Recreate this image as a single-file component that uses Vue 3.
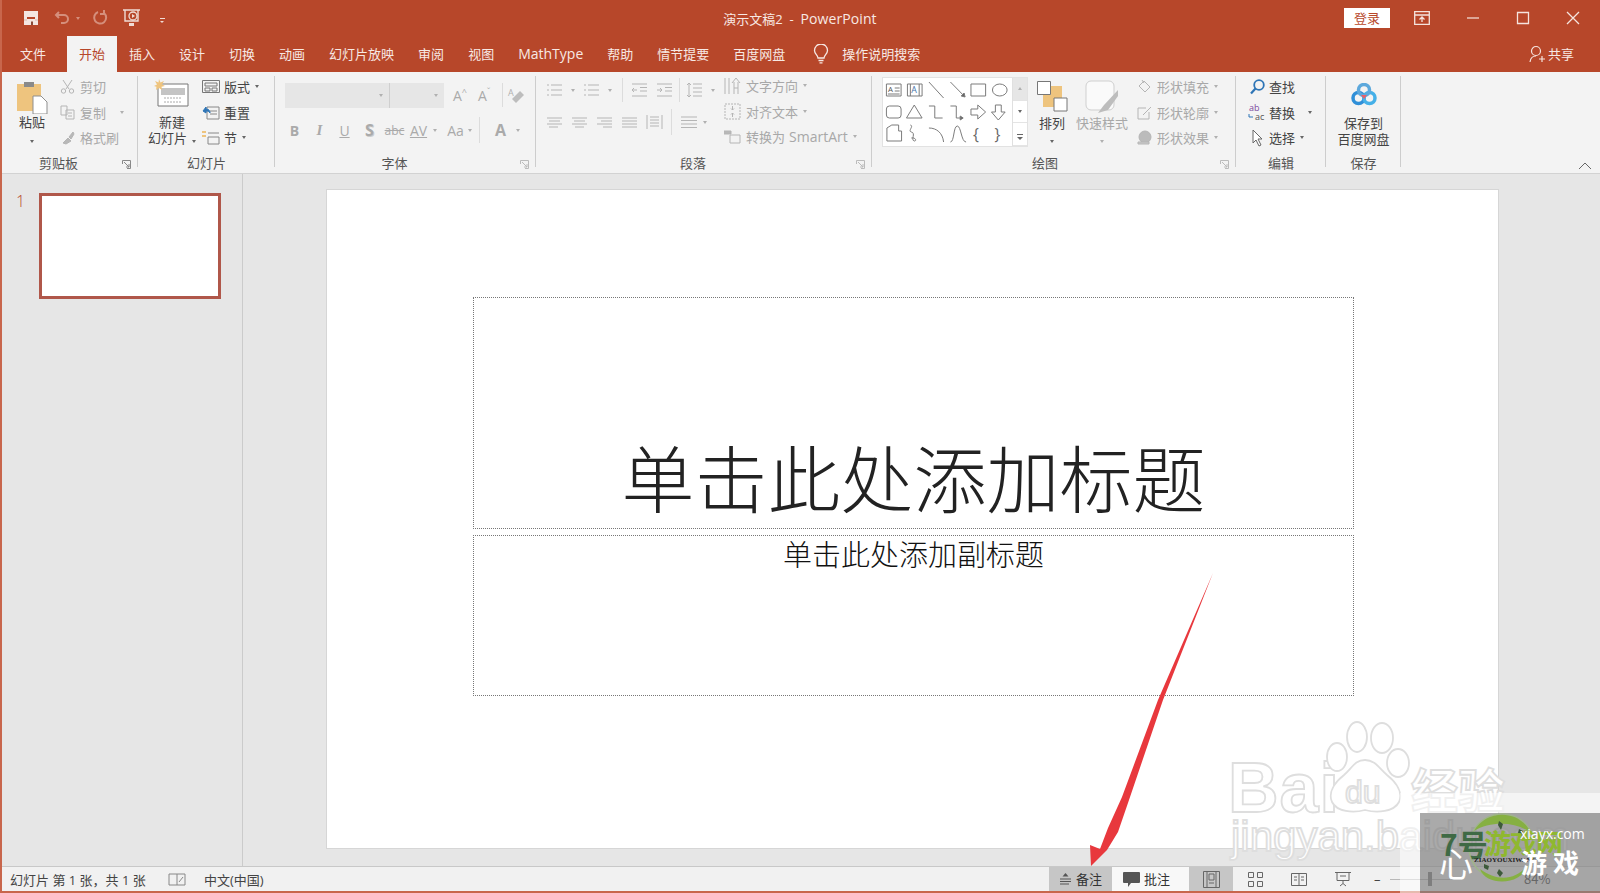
<script setup>
const tabs = [
  { name: '文件', cls: 'first' }, { name: '开始', cls: 'on' }, { name: '插入' }, { name: '设计' }, { name: '切换' }, { name: '动画' },
  { name: '幻灯片放映' }, { name: '审阅' }, { name: '视图' }, { name: 'MathType', cls: 'latin' }, { name: '帮助' }, { name: '情节提要' }, { name: '百度网盘' }
]
// 段落 group, line icons
const bullets = ['M1 2h2M1 7h2M1 12h2M5 2h11M5 7h11M5 12h11', 'M1 2h2M1 7h2M1 12h2M5 2h11M5 7h11M5 12h11']
const paraBottom = [
  'M1 3h15M3 6h11M1 9h15M3 12h9',
  'M1 3h15M3 6h11M1 9h15M4 12h9',
  'M1 3h15M5 6h11M1 9h15M7 12h9',
  'M1 3h15M1 6h15M1 9h15M1 12h15',
]
</script>

<template>
  <div class="win">
    <header class="titlebar">
      <div class="qat">
        <svg class="q" width="18" height="18" viewBox="0 0 18 18"><path d="M2 2h14v14H2z" fill="#f4e6e1"/><path d="M5 8h8v2H5z" fill="#b7472a"/><path d="M5 12h8v4H5z" fill="#f4e6e1"/><path d="M9 12.500h2v3.500H9z" fill="#8a4a38"/><path d="M2 10.500h3v1H2zM13 10.500h3v1h-3z" fill="#d9b8ae"/></svg>
        <svg class="q dim" width="18" height="16" viewBox="0 0 18 16"><path d="M5 2 2 5l3 3M2 5h8a4 4 0 0 1 0 8H7" fill="none" stroke="#d58f7c" stroke-width="2"/></svg>
        <i class="mini-dd dimdd"></i>
        <svg class="q redo" width="18" height="18" viewBox="0 0 18 18"><path d="M7 3a6 6 0 1 0 6 1M13 1v4H9" fill="none" stroke="#d58f7c" stroke-width="2"/></svg>
        <svg class="q show" width="20" height="20" viewBox="0 0 20 20"><path d="M1 2h17M3 2v11h13V2" fill="none" stroke="#f0dcd5" stroke-width="1.4"/><circle cx="11" cy="8" r="4" fill="none" stroke="#f0dcd5" stroke-width="1.3"/><path d="M10 6l3 2-3 2z" fill="#f0dcd5"/><path d="M7 15h5v3H7z" fill="#f0dcd5"/></svg>
        <span class="qat-more"></span>
      </div>
      <div class="doc-title">演示文稿2 &nbsp;-&nbsp; <span class="pp">PowerPoint</span></div>
      <div class="winctl">
        <span class="login">登录</span>
        <svg class="wc first" width="16" height="14" viewBox="0 0 16 14"><path d="M.7.7h14.6v12.6H.7zM.7 4h14.6M8 6v5M5.5 8.5 8 6l2.500 2.500" fill="none" stroke="#f5e4de" stroke-width="1.3"/></svg>
        <svg class="wc" width="14" height="14" viewBox="0 0 14 14"><path d="M1 7h12" stroke="#f5e4de" stroke-width="1.2"/></svg>
        <svg class="wc" width="14" height="14" viewBox="0 0 14 14"><path d="M1.500 1.500h11v11h-11z" fill="none" stroke="#f5e4de" stroke-width="1.300"/></svg>
        <svg class="wc" width="14" height="14" viewBox="0 0 14 14"><path d="m1 1 12 12M13 1 1 13" stroke="#f5e4de" stroke-width="1.300"/></svg>
      </div>
    </header>

    <nav class="tabs">
      <span v-for="t in tabs" :key="t.name" class="tab" :class="t.cls">{{ t.name }}</span>
      <svg class="bulb" width="16" height="20" viewBox="0 0 16 20"><path d="M5 14c0-3-3.500-4-3.500-7.500a6.500 6.500 0 0 1 13 0C14.500 10 11 11 11 14zM5.500 16.500h5M6.500 18.800h3" fill="none" stroke="#f7e9e4" stroke-width="1.300"/></svg>
      <span class="tell">操作说明搜索</span>
      <span class="share">
        <svg width="16" height="18" viewBox="0 0 16 18"><circle cx="7" cy="6" r="4.500" fill="none" stroke="#f5e4de" stroke-width="1.200"/><path d="M1 17c.5-4 3-6 6-6M10 14h6M13 11v6" fill="none" stroke="#f5e4de" stroke-width="1.200"/></svg>
        共享
      </span>
    </nav>

    <section class="ribbon">
      <div class="group" style="width: 137px">
        <div class="body clip">
          <div class="big paste">
            <svg width="32" height="34" viewBox="0 0 32 34"><path d="M1 4h24v27H1z" fill="#eec47e"/><path d="M8 2h10v5H8z" fill="#8a8a8a"/><path d="M17 16h8l6 6v12H17z" fill="#fff" stroke="#8f8f8f"/></svg>
            <span class="blk">粘贴</span>
            <i class="mini-dd dark"></i>
          </div>
          <div class="col off">
            <div class="row"><svg class="i" width="15" height="15" viewBox="0 0 15 15"><circle cx="3.500" cy="12" r="2.200"/><circle cx="11.500" cy="12" r="2.200"/><path d="M3 1l6 9M12 1l-6 9"/></svg>剪切</div>
            <div class="row"><svg class="i" width="15" height="15" viewBox="0 0 15 15"><path d="M1 1h6v9H1zM6 5h8v9H6zM8 8h4M8 11h4"/></svg>复制<i class="mini-dd dd-l"></i></div>
            <div class="row"><svg class="i" width="15" height="15" viewBox="0 0 15 15"><path d="M3 13l5-5 3 3-5 3zM9 7l4-5 1 2-3 5z" fill="#b8b8b8"/></svg>格式刷</div>
          </div>
        </div>
        <div class="label has-launch">剪贴板<svg class="launch" width="9" height="9" viewBox="0 0 9 9"><path d="M.5 4V.5H8.500V8.500H5M2 2l5 5M7 4v3H4" fill="none" stroke="#888"/></svg></div>
      </div>

      <div class="group" style="width: 137px">
        <div class="body slides">
          <div class="big newslide">
            <svg width="36" height="28" viewBox="0 0 36 28"><path d="M4 5h30v22H4z" fill="#fff" stroke="#777"/><path d="M7 9h24v7H7z" fill="#c4c4c4"/><path d="M10 19h18M10 23h18" stroke="#aaa" stroke-dasharray="2 1"/><path d="M5 0l1.500 3.500L10 2 8 5.500 11 7 7.500 7.800 8 11 5 9 2 11 2.500 7.800 0 7l3-1.500L1 2l3.500 1.500z" fill="#eec47e"/></svg>
            <span class="blk">新建</span>
            <span class="blk">幻灯片<i class="mini-dd dark inl"></i></span>
          </div>
          <div class="col">
            <div class="row"><svg class="i dk" width="18" height="13" viewBox="0 0 18 13"><path d="M.5.500h17v12H.500zM3 3h12v3H3zM3 8h5v3H3zM10 8h5v3h-5z"/></svg>版式<i class="mini-dd dark inl"></i></div>
            <div class="row"><svg class="i dk" width="18" height="15" viewBox="0 0 18 15"><path d="M5 2h12v12H5zM8 6h7M8 9h7" stroke="#888"/><path d="M1 6l3-4v2c3 0 4 2 4 4-1-1.500-2-2-4-2v2z" fill="#2e75b6" stroke="#2e75b6"/></svg>重置</div>
            <div class="row"><svg class="i dk" width="18" height="15" viewBox="0 0 18 15"><path d="M6 7h11v7H6zM6 3h11" stroke="#888"/><path d="M0 1h4v2H0zM0 5h4v2H0z" fill="#eec47e" stroke="none"/></svg>节<i class="mini-dd dark inl"></i></div>
          </div>
        </div>
        <div class="label">幻灯片</div>
      </div>

      <div class="group" style="width: 261px">
        <div class="body font off">
          <div class="frow">
            <span class="combo wide"><i class="mini-dd"></i></span>
            <span class="combo narrow"><i class="mini-dd"></i></span>
            <span class="fbtn grow-a">A<sup>^</sup></span>
            <span class="fbtn grow-a">A<sup>ˇ</sup></span>
            <span class="vs"></span>
            <svg class="eraser" width="18" height="18" viewBox="0 0 18 18"><path d="M9 17l-4-4 8-8 4 4z" fill="#bdbdbd"/><text x="1" y="10" font-size="9" fill="#b0b0b0">A</text></svg>
          </div>
          <div class="frow low">
            <b class="fc">B</b><i class="fc serif">I</i><u class="fc">U</u><b class="fc sh">S</b>
            <s class="fc abc">abc</s><span class="fc av">AV</span><i class="mini-dd"></i>
            <span class="fc aa">Aa</span><i class="mini-dd"></i>
            <span class="vs tall"></span>
            <b class="fc colr">A</b><i class="mini-dd"></i>
          </div>
        </div>
        <div class="label has-launch">字体<svg class="launch" width="9" height="9" viewBox="0 0 9 9"><path d="M.5 4V.5H8.500V8.500H5M2 2l5 5M7 4v3H4" fill="none" stroke="#bbb"/></svg></div>
      </div>

      <div class="group" style="width: 336px">
        <div class="body para off">
          <div class="pleft">
            <div class="frow ptop">
              <template v-for="(d, i) in bullets" :key="i">
                <svg class="i lns" width="17" height="14" viewBox="0 0 17 14"><path :d="d"/></svg><i class="mini-dd pdd"></i>
              </template>
              <span class="vs v1"></span>
              <svg class="i lns" width="17" height="14" viewBox="0 0 17 14"><path d="M1 1h15M9 4.500h7M9 8h7M1 13h15M6 7H1M3 5 1 7l2 2"/></svg>
              <svg class="i lns" width="17" height="14" viewBox="0 0 17 14"><path d="M1 1h15M9 4.500h7M9 8h7M1 13h15M1 7h5M4 5l2 2-2 2"/></svg>
              <span class="vs v2"></span>
              <svg class="i lns" width="17" height="16" viewBox="0 0 17 16"><path d="M7 2h9M7 6h9M7 10h9M7 14h9M3 1v14M1 3l2-2 2 2M1 13l2 2 2-2"/></svg><i class="mini-dd pdd"></i>
            </div>
            <div class="frow pbot">
              <svg v-for="d in paraBottom" :key="d" class="i lns pa" width="17" height="14" viewBox="0 0 17 14"><path :d="d"/></svg>
              <svg class="i lns pa" width="17" height="16" viewBox="0 0 17 16"><path d="M1 1v14M16 1v14M4 3h9M4 6h9M4 9h9M4 12h9"/></svg>
              <span class="vs tall"></span>
              <svg class="i lns" width="18" height="14" viewBox="0 0 18 14"><path d="M1 2h16M1 5.500h16M1 9h16M1 12.500h16"/></svg><i class="mini-dd pdd2"></i>
            </div>
          </div>
          <div class="col pright">
            <div class="row"><svg class="i" width="17" height="20" viewBox="0 0 17 20"><path d="M1 2v16M5 2v16M10 18V6M14 18V6M8 7l4-5 4 5M10 12h4"/></svg>文字方向<i class="mini-dd inl"></i></div>
            <div class="row"><svg class="i" width="17" height="17" viewBox="0 0 17 17"><path d="M1 1h15v15H1z" stroke-dasharray="2 1"/><path d="M8.500 3v4M7 5.500 8.500 7 10 5.500M8.500 14v-4M7 11.500 8.500 10l1.500 1.500"/></svg>对齐文本<i class="mini-dd inl"></i></div>
            <div class="row"><svg class="i" width="17" height="15" viewBox="0 0 17 15"><path d="M6 6h10v8H6z"/><path d="M0 2h7v3H0z" fill="#b8b8b8"/></svg>转换为 <span class="sa">SmartArt</span><i class="mini-dd inl"></i></div>
          </div>
        </div>
        <div class="label has-launch">段落<svg class="launch" width="9" height="9" viewBox="0 0 9 9"><path d="M.5 4V.5H8.500V8.500H5M2 2l5 5M7 4v3H4" fill="none" stroke="#bbb"/></svg></div>
      </div>

      <div class="group" style="width: 364px">
        <div class="body draw">
          <div class="gallery">
            <svg width="129" height="68" viewBox="0 0 132 68" preserveAspectRatio="none" fill="none" stroke="#7a7a7a" stroke-width="1">
              <path d="M3.500 6h15v12h-15zM12 10h5M12 13h5M5 16h12"/><text x="5" y="14" font-size="8" fill="#555" stroke="none">A</text>
              <path d="M25 6h15v12H25zM28 6v12M37 6v12"/><text x="29" y="15" font-size="9" fill="#4472a8" stroke="none">A</text>
              <path d="M47 4l15 16M69 4l15 15"/><path d="M84 19l-4-1 3-3z" fill="#666"/>
              <path d="M90 6h15v12H90zM112 12a7.500 6 0 1 0 15 0a7.500 6 0 1 0-15 0"/>
              <rect x="3.500" y="28" width="15" height="12" rx="3"/><path d="M32 27 40 40H24zM47 28h6v12h8M69 28h6v12h7"/><path d="M82 40l-3-2v4z" fill="#666"/>
              <path d="M90 31h7v-4l8 7-8 7v-4h-7zM115 27h6v7h4l-7 8-7-8h4z"/>
              <path d="M4 50l5-3h7v6h3v10H4zM28 47c4 1-3 6 1 7 5 1-1 8 3 9 3 0 1-4-3-3M47 50c8 0 14 5 15 14M69 64c4 0 3-16 7-16s4 16 9 16"/>
              <text x="92" y="62" font-size="16" fill="#666" stroke="none">{</text><text x="114" y="62" font-size="16" fill="#666" stroke="none">}</text>
            </svg>
            <div class="gscroll">
              <span class="up"><i class="mini-dd gdd"></i></span>
              <span><i class="mini-dd gdd dk2"></i></span>
              <span><i class="more"></i></span>
            </div>
          </div>
          <div class="big arrange">
            <svg width="32" height="32" viewBox="0 0 32 32"><path d="M15 6h11v12H15zM7 15h11v12H7z" fill="#eec47e"/><path d="M1.500 1.500h13v13h-13zM18 18h13v13H18z" fill="#fff" stroke="#777"/></svg>
            <span class="blk">排列</span>
            <i class="mini-dd dark"></i>
          </div>
          <div class="big quick off">
            <svg width="34" height="34" viewBox="0 0 34 34"><rect x="1" y="1" width="28" height="29" rx="5" fill="#fafafa" stroke="#cfcfcf"/><path d="M33 10 19 25l-6 8 10-3 10-14z" fill="#bdbdbd"/></svg>
            <span class="blk">快速样式</span>
            <i class="mini-dd"></i>
          </div>
          <div class="col off shapefx">
            <div class="row"><svg class="i" width="15" height="15" viewBox="0 0 15 15"><path d="M7 2l6 6-5 5-6-6zM5 1l2 3"/></svg>形状填充<i class="mini-dd inl"></i></div>
            <div class="row"><svg class="i" width="15" height="15" viewBox="0 0 15 15"><path d="M1 3h8M1 3v11h11V7M6 10l8-8"/></svg>形状轮廓<i class="mini-dd inl"></i></div>
            <div class="row"><svg class="i" width="15" height="15" viewBox="0 0 15 15"><circle cx="8" cy="7" r="6" fill="#bbb"/><path d="M1 12h11v2H1z" fill="#ccc"/></svg>形状效果<i class="mini-dd inl"></i></div>
          </div>
        </div>
        <div class="label lab-draw">绘图<svg class="launch" width="9" height="9" viewBox="0 0 9 9"><path d="M.5 4V.5H8.500V8.500H5M2 2l5 5M7 4v3H4" fill="none" stroke="#bbb"/></svg></div>
      </div>

      <div class="group" style="width: 90px">
        <div class="body edit">
          <div class="col">
            <div class="row"><svg class="ei" width="18" height="16" viewBox="0 0 18 16"><circle cx="11" cy="6" r="4.800" fill="none" stroke="#2e75b6" stroke-width="1.800"/><path d="M7.500 9.500 3 14.500" stroke="#2e75b6" stroke-width="2.200"/></svg>查找</div>
            <div class="row"><svg class="ei" width="18" height="20" viewBox="0 0 18 20"><text x="1" y="9" font-size="9" fill="#7b4a9e">ab</text><text x="7" y="18" font-size="9" fill="#555">ac</text><path d="M1 12v3h4" fill="none" stroke="#2e75b6"/></svg>替换<i class="mini-dd dark far"></i></div>
            <div class="row"><svg class="ei" width="18" height="18" viewBox="0 0 18 18"><path d="M5 1v13l3-3 3 6 2-1-3-6h4z" fill="#fff" stroke="#666"/></svg>选择<i class="mini-dd dark inl"></i></div>
          </div>
        </div>
        <div class="label">编辑</div>
      </div>

      <div class="group" style="width: 75px">
        <div class="body save">
          <svg width="26" height="24" viewBox="0 0 26 24" fill="none"><circle cx="7.500" cy="15" r="5.500" stroke="#2f8fd8" stroke-width="3.500"/><circle cx="18.500" cy="15" r="5.500" stroke="#45b0e8" stroke-width="3.500"/><circle cx="13" cy="7" r="5.500" stroke="#5ca8dc" stroke-width="3.500"/><path d="M10 12h6l-3 4z" fill="#e8606a"/></svg>
          <span class="blk s1">保存到</span>
          <span class="blk">百度网盘</span>
        </div>
        <div class="label">保存</div>
      </div>

      <svg class="collapse" width="14" height="8" viewBox="0 0 14 8"><path d="m1 7 6-6 6 6" fill="none" stroke="#666"/></svg>
    </section>

    <main class="main">
      <aside class="thumbs">
        <span class="num">1</span>
        <div class="thumb"></div>
      </aside>
      <div class="stage">
        <div class="slide">
          <div class="ph title-ph">单击此处添加标题</div>
          <div class="ph sub-ph">单击此处添加副标题</div>
        </div>
      </div>
    </main>

    <footer class="status">
      <span class="st-text">幻灯片 第 1 张，共 1 张</span>
      <svg class="st-book" width="18" height="15" viewBox="0 0 18 15"><path d="M9 2H1v11h8V2h8v11H9M11 10l4-5" fill="none" stroke="#888"/></svg>
      <span class="st-lang">中文(中国)</span>
      <div class="st-right">
        <span class="st-btn notes"><svg width="13" height="12" viewBox="0 0 13 12"><path d="m6.500 0 3 3.500h-6z" fill="#555"/><path d="M1 6h11M1 8.500h11M1 11h9" stroke="#555"/></svg>备注</span>
        <span class="st-btn comments"><svg width="17" height="15" viewBox="0 0 17 15"><path d="M1 0h15a1 1 0 0 1 1 1v9a1 1 0 0 1-1 1H8l-3 4v-4H1a1 1 0 0 1-1-1V1a1 1 0 0 1 1-1z" fill="#555"/></svg>批注</span>
        <span class="view on"><svg width="17" height="17" viewBox="0 0 17 17"><path d="M.5.500h16v16H.500zM4 .5v16M13 .5v16M6 3h5v6H6zM6 12h5" fill="none" stroke="#666"/></svg></span>
        <span class="view"><svg width="15" height="15" viewBox="0 0 15 15"><path d="M.5.500h5v5h-5zM9.500.5h5v5h-5zM.5 9.500h5v5h-5zM9.500 9.500h5v5h-5z" fill="none" stroke="#666"/></svg></span>
        <span class="view"><svg width="16" height="15" viewBox="0 0 16 15"><path d="M.5 1.500h15v12H.500zM8 1.500v12M3 5h3M3 8h3M10 5h3M10 8h3" fill="none" stroke="#666"/></svg></span>
        <span class="view"><svg width="16" height="16" viewBox="0 0 16 16"><path d="M0 1.500h16M2 1.500v8h12v-8M8 9.500v3M5 15l3-2.500 3 2.500M5 5h6" fill="none" stroke="#666"/></svg></span>
        <div class="zoom">
          <span class="zm">–</span>
          <span class="slider"><i class="thumb-z"></i></span>
        </div>
      </div>
    </footer>

    <svg class="overlay" width="1600" height="893" viewBox="0 0 1600 893">
      <g fill="#fff" stroke="#dedede" stroke-width="1.800" font-family="'Liberation Sans', sans-serif" font-weight="700">
        <text x="1228" y="812" font-size="70" letter-spacing="1">Bai</text>
        <ellipse cx="1337" cy="757" rx="10" ry="14"/>
        <ellipse cx="1357" cy="737" rx="10" ry="15"/>
        <ellipse cx="1382" cy="738" rx="11" ry="15"/>
        <ellipse cx="1398" cy="763" rx="11" ry="14"/>
        <path d="M1365 760c10 0 14 8 22 15 10 8 16 18 12 27-5 10-22 11-34 8-12 3-28 2-33-8-4-9 2-19 12-27 8-7 11-15 21-15z"/>
        <text x="1345" y="803" font-size="32" font-weight="400">du</text>
        <text x="1411" y="808" font-size="47" font-family="'Noto Sans CJK SC', sans-serif">经验</text>
        <text x="1231" y="851" font-size="42" font-weight="400">jingyan.baidu.com</text>
      </g>
      <path d="M1213 573 1163 700 1129 800 1118 832 1107 850 1091 866 1090 845 1100 849 1108 828 1122 797 1158 700z" fill="#e8383d"/>
    </svg>

    <div class="wm-strip"></div>
    <div class="wm-col"></div>
    <div class="wm-box">
      <span class="wm-zoom">84%</span>
      <svg class="wm-logo" width="76" height="76" viewBox="0 0 76 76">
        <circle cx="38" cy="38" r="33" fill="none" stroke="#9fb58a" stroke-width="1.500"/>
        <path d="M10 22C22 0 56 0 67 24 52 12 26 12 10 22zM16 60c16 12 34 12 46-2-4 18-40 20-46 2z" fill="#86b042"/>
        <path d="M35 12l4 3-2 6-3-5zM55 20l4 2-1 5-4-3zM35 60l4 4-3 4-3-4zM20 55l5 2-1 4-4-2z" fill="#3d5a3a"/>
      </svg>
      <span class="wm-7">7号</span>
      <span class="wm-game">游戏网</span>
      <span class="wm-url">xiayx.com</span>
      <span class="wm-pin">ZIAOYOUXIWANG</span>
      <span class="wm-xin">心</span>
      <span class="wm-yx">游 戏</span>
    </div>
  </div>
</template>

<style>
html, body { margin: 0; overflow: hidden; }
</style>

<style scoped>
.win {
  position: relative;
  width: 1600px;
  height: 893px;
  overflow: hidden;
  display: flex;
  flex-direction: column;
  background: #e6e6e6;
  font-family: "Open Sans", "Noto Sans CJK SC", sans-serif;
  font-size: 13px;
  color: #444;
  box-sizing: border-box;
  border-left: 2px solid #c8664c;
}
.titlebar {
  height: 36px;
  margin-left: -2px;
  background: #b7472a;
  display: grid;
  grid-template-columns: 1fr auto 1fr;
  align-items: center;
  color: #f7e9e4;
  flex: none;
}
.qat { display: flex; align-items: center; padding-left: 22px; }
.q { flex: none; }
.q.dim { margin-left: 14px; }
.redo { margin-left: 11px; }
.show { margin-left: 13px; }
.qat-more { margin-left: 18px; width: 5px; height: 1px; background: #f0dcd5; position: relative; }
.qat-more::after { content: ""; position: absolute; left: 0; top: 3px; border: 2.500px solid transparent; border-top-color: #f0dcd5; }
.doc-title { font-size: 13px; }
.pp { font-size: 14px; letter-spacing: .1px; }
.winctl { display: flex; align-items: center; justify-content: flex-end; padding-right: 20px; }
.login { width: 46px; height: 20px; background: #fff; color: #b7472a; text-align: center; line-height: 20px; font-size: 13px; margin-right: 24px; }
.wc { margin-left: 36px; }
.wc.first { margin-left: 0; }

.tabs {
  height: 36px;
  margin-left: -2px;
  background: #b7472a;
  color: #f7e9e4;
  display: flex;
  align-items: stretch;
  padding-left: 8px;
  line-height: 36px;
  flex: none;
}
.tab { padding: 0 12px; white-space: nowrap; }
.tab.first { padding-right: 21px; }
.tab.latin { font-size: 14px; }
.tab.on { background: #f3f3f3; color: #b7472a; }
.bulb { align-self: center; margin-left: 16px; }
.tell { margin-left: 13px; }
.share { margin-left: auto; padding-right: 26px; display: flex; align-items: center; gap: 3px; }

.ribbon {
  height: 102px;
  flex: none;
  background: #f3f3f3;
  border-bottom: 1px solid #d2d2d2;
  box-sizing: border-box;
  display: flex;
  position: relative;
  margin-left: -1px;
}
.group {
  position: relative;
  flex: none;
  display: flex;
  flex-direction: column;
  box-sizing: border-box;
  padding-top: 2px;
}
.group::after {
  content: "";
  position: absolute;
  right: 0;
  top: 4px;
  bottom: 6px;
  width: 1px;
  background: #cdcdcd;
}
.body { height: 79px; display: flex; position: relative; }
.label { height: 20px; line-height: 20px; text-align: center; color: #555; position: relative; }
.has-launch { padding-right: 22px; box-sizing: border-box; }
.launch { position: absolute; right: 7px; top: 7px; }
.lab-draw { padding-right: 18px; box-sizing: border-box; }
.blk { display: block; line-height: 16px; white-space: nowrap; }
.big { display: flex; flex-direction: column; align-items: center; }
.col { display: flex; flex-direction: column; padding-top: 0; }
.row { height: 25.500px; display: flex; align-items: center; white-space: nowrap; }
.i { fill: none; stroke: #b5b5b5; margin-right: 5px; flex: none; }
.i.dk { stroke: #777; margin-right: 4px; }
.off { color: #a8a8a8; }
.mini-dd { display: inline-block; width: 0; height: 0; border: 2.500px solid transparent; border-top: 3px solid #b0b0b0; border-bottom: 0; flex: none; }
.mini-dd.dark { border-top-color: #666; }
.mini-dd.inl { margin-left: 5px; }
.dd-l { margin-left: 14px; }
.dimdd { margin-left: 4px; border-top-color: #d58f7c; }

.clip { padding-left: 15px; }
.paste { width: 32px; padding-top: 6px; }
.paste .blk { margin-top: 0; }
.paste .mini-dd { margin-top: 10px; }
.clip .col { margin-left: 12px; }
.slides { padding-left: 12px; }
.newslide { width: 44px; padding-top: 5px; }
.newslide .blk { margin-top: 0; }
.newslide svg { margin-bottom: 7px; }
.slides .col { margin-left: 8px; }

.font { flex-direction: column; padding-left: 10px; }
.frow { display: flex; align-items: center; }
.font .frow { height: 26px; margin-top: 8px; }
.font .low { margin-top: 9px; margin-left: -3px; }
.combo { height: 25px; background: #e6e6e6; display: flex; align-items: center; justify-content: flex-end; padding-right: 6px; box-sizing: border-box; }
.combo.wide { width: 105px; border-right: 1px solid #cfcfcf; }
.combo.narrow { width: 54px; }
.fbtn { margin-left: 9px; width: 16px; font-size: 14px; color: #aaa; white-space: nowrap; }
.fbtn sup { font-size: 9px; line-height: 0; }
.vs { width: 1px; height: 24px; background: #dcdcdc; margin: 0 8px; flex: none; }
.vs.tall { height: 26px; margin: 0 8px 0 7px; }
.eraser { margin-left: -4px; }
.fc { width: 25px; text-align: center; font-size: 14px; color: #aaa; text-decoration-thickness: 1px; flex: none; }
.serif { font-family: "Liberation Serif", serif; font-style: italic; font-weight: 700; font-size: 15px; }
.sh { text-shadow: 1px 1px 0 #ccc; font-size: 16px; }
.fc.abc { font-size: 12px; }
.fc.av { text-decoration: underline; font-size: 14px; margin: 0 2px 0 -1px; }
.fc.aa { margin-left: 6px; }
.fc.colr { font-size: 16px; margin-right: 3px; }

.para { padding-left: 10px; }
.pleft { width: 186px; flex: none; }
.ptop { height: 26px; margin-top: 3px; }
.pbot { height: 26px; margin-top: 6px; }
.lns { stroke: #b5b5b5; margin-right: 0; }
.pdd { margin: 0 8px 0 8px; }
.pdd2 { display: inline-block; width: 0; height: 0; border: 2.500px solid transparent; border-top: 3px solid #b0b0b0; border-bottom: 0; margin-left: 5px; }
.v1 { margin: 0 8px 0 2px; }
.v2 { margin: 0 6px; }
.ptop .lns + .lns { margin-left: 8px; }
.pa { margin-right: 8px; }
.para .vs.tall { margin: 0 8px 0 0; }
.pright { margin-left: -8px; margin-top: -1px; }
.sa { font-size: 14px; margin-left: 4px; }

.draw { padding-left: 11px; }
.gallery { width: 144px; height: 68px; margin-top: 4px; background: #fff; display: flex; box-shadow: 0 0 0 1px #e2e2e2; flex: none; }
.gallery svg { flex: none; }
.gscroll { width: 15px; display: flex; flex-direction: column; border-left: 1px solid #e0e0e0; }
.gscroll span { flex: 1; display: flex; align-items: center; justify-content: center; border-bottom: 1px solid #e4e4e4; }
.gscroll .up { background: #e6e6e6; }
.gdd.dk2 { border-top-color: #666; }
.up .gdd { transform: rotate(180deg); }
.more { width: 6px; height: 1px; background: #666; position: relative; }
.more::after { content: ""; position: absolute; left: 0; top: 3px; border: 3px solid transparent; border-top-color: #666; }
.arrange { margin-left: 9px; width: 32px; padding-top: 6px; }
.arrange .blk { margin-top: 3px; }
.arrange .mini-dd { margin-top: 9px; }
.quick { margin-left: 7px; width: 54px; padding-top: 6px; }
.quick .blk { margin-top: 1px; }
.quick .mini-dd { margin-top: 9px; }
.shapefx { margin-left: 8px; }

.edit { padding-left: 12px; }
.ei { flex: none; margin-right: 3px; }
.edit .row { color: #444; }
.far { margin-left: 13px; }
.save { flex-direction: column; align-items: center; padding-top: 9px; box-sizing: border-box; }
.save svg { margin-bottom: 8px; }
.collapse { position: absolute; right: 8px; top: 90px; }

.main { flex: 1; display: flex; min-height: 0; background: #e6e6e6; border-bottom: 1px solid #c8c8c8; }
.thumbs { width: 241px; border-right: 1px solid #cbcbcb; display: flex; padding: 19px 0 0 14px; box-sizing: border-box; flex: none; }
.num { color: #b7472a; font-size: 16px; width: 23px; line-height: 16px; font-weight: 300; }
.thumb { width: 182px; height: 106px; border: 3px solid #b0574a; background: #fff; box-sizing: border-box; }
.stage { flex: 1; padding: 16px 0 0 84px; }
.slide {
  width: 1171px;
  height: 658px;
  background: #fff;
  box-shadow: 0 0 0 1px #d6d6d6;
  padding: 107px 0 0 146px;
  box-sizing: border-box;
}
.ph { width: 881px; border: 1px dotted #777; box-sizing: border-box; text-align: center; color: #222; font-weight: 300; font-family: "Noto Sans CJK SC", sans-serif; }
.title-ph { height: 232px; font-size: 73px; line-height: 100px; display: flex; align-items: flex-end; justify-content: center; padding-bottom: 3px; }
.sub-ph { height: 161px; margin-top: 6px; font-size: 29px; line-height: 34px; color: #111; }

.status { flex: none; background: #f1f1f1; display: flex; align-items: stretch; border-bottom: 2px solid #c8664c; height: 24px; line-height: 26px; }
.st-text { margin-left: 8px; width: 145px; }
.st-book { align-self: center; margin-left: 13px; }
.st-lang { margin-left: 18px; }
.st-right { margin-left: auto; display: flex; align-items: stretch; }
.st-btn { display: flex; align-items: center; gap: 4px; justify-content: center; }
.notes { width: 63px; background: #c6c6c6; color: #333; }
.comments { width: 77px; background: #f8f8f8; color: #333; justify-content: flex-start; padding-left: 11px; box-sizing: border-box; }
.view { width: 44px; display: flex; align-items: center; justify-content: center; }
.view.on { background: #c6c6c6; }
.zoom { width: 235px; display: flex; align-items: center; padding-left: 9px; box-sizing: border-box; }
.zm { width: 16px; color: #444; }
.slider { width: 60px; height: 1px; background: #b8b8b8; position: relative; }
.thumb-z { position: absolute; left: 38px; top: -7px; width: 4px; height: 14px; background: #777; }

.overlay { position: absolute; left: -2px; top: 0; pointer-events: none; }
.wm-strip { position: absolute; left: 1398px; top: 793px; width: 200px; height: 20px; background: rgba(255, 255, 255, .55); }
.wm-col { position: absolute; left: 1398px; top: 813px; width: 20px; height: 80px; background: rgba(255, 255, 255, .55); }
.wm-box { position: absolute; left: 1418px; top: 813px; width: 180px; height: 80px; background: rgba(130, 130, 130, .68); overflow: hidden; font-family: "Noto Sans CJK SC", sans-serif; }
.wm-box span { position: absolute; white-space: nowrap; }
.wm-logo { position: absolute; left: 44px; top: -4px; }
.wm-zoom { left: 104px; top: 56px; color: #666; font-size: 13px; }
.wm-7 { left: 20px; top: 12px; font-size: 30px; line-height: 36px; font-weight: 700; color: #3f6a45; }
.wm-game { left: 64px; top: 12px; font-size: 27px; line-height: 36px; font-weight: 700; color: #8fb82f; letter-spacing: -1px; }
.wm-url { left: 100px; top: 10px; font-size: 14px; line-height: 22px; color: #fff; font-family: "Open Sans", sans-serif; }
.wm-pin { left: 54px; top: 42px; font-size: 7px; line-height: 10px; color: #222; font-family: "Liberation Serif", serif; font-weight: 700; }
.wm-xin { left: 19px; top: 30px; font-size: 34px; line-height: 40px; color: #fff; }
.wm-yx { left: 101px; top: 33px; font-size: 26px; line-height: 32px; font-weight: 700; color: #fff; }
</style>
